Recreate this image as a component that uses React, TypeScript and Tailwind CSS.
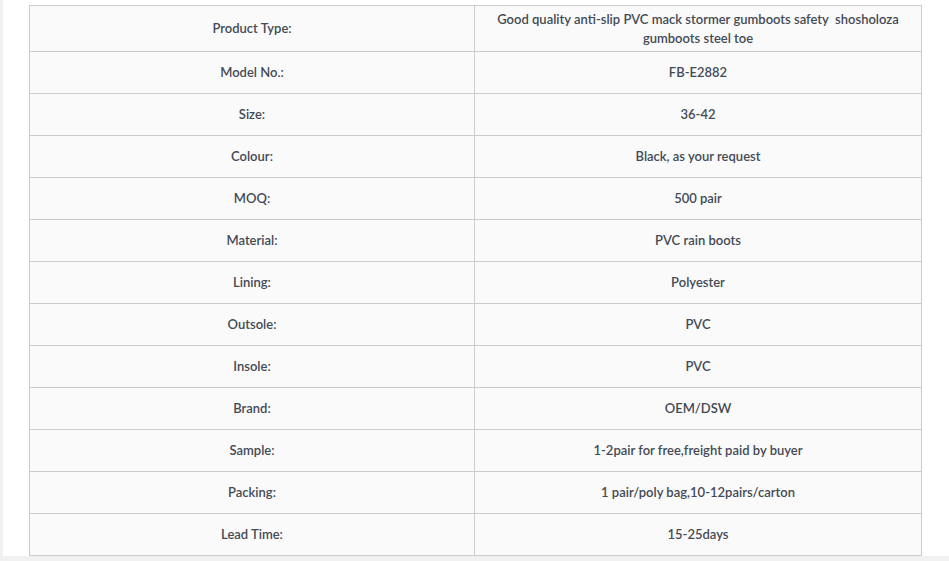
import React from "react";

const rows: [string, React.ReactNode][] = [
  ["Product Type:", <><span className="whitespace-nowrap">Good quality anti-slip PVC mack stormer gumboots safety&nbsp; shosholoza</span><br />gumboots steel toe</>],
  ["Model No.:", "FB-E2882"],
  ["Size:", "36-42"],
  ["Colour:", "Black, as your request"],
  ["MOQ:", "500 pair"],
  ["Material:", "PVC rain boots"],
  ["Lining:", "Polyester"],
  ["Outsole:", "PVC"],
  ["Insole:", "PVC"],
  ["Brand:", "OEM/DSW"],
  ["Sample:", "1-2pair for free,freight paid by buyer"],
  ["Packing:", "1 pair/poly bag,10-12pairs/carton"],
  ["Lead Time:", "15-25days"],
];

export default function App() {
  return (
    <div className="w-[949px] h-[561px] bg-[#f1f1f1] overflow-hidden">
      <div className="ml-[3px] h-[556px] bg-white pt-[5px] pl-[26px]">
        <table
          className="w-[892px] table-fixed border-collapse bg-[#fafafa] text-[13px] font-semibold text-[#444a55]"
          style={{ fontFamily: "Lato, 'Open Sans', sans-serif" }}
        >
          <colgroup>
            <col className="w-[445px]" />
            <col className="w-[447px]" />
          </colgroup>
          <tbody>
            {rows.map(([k, v], i) => (
              <tr key={k} className={i === 0 ? "h-[46px]" : "h-[42px]"}>
                <td className="border border-[#cccccc] text-center leading-[19px] px-2">{k}</td>
                <td className="border border-[#cccccc] text-center leading-[19px] px-2">{v}</td>
              </tr>
            ))}
          </tbody>
        </table>
      </div>
    </div>
  );
}
